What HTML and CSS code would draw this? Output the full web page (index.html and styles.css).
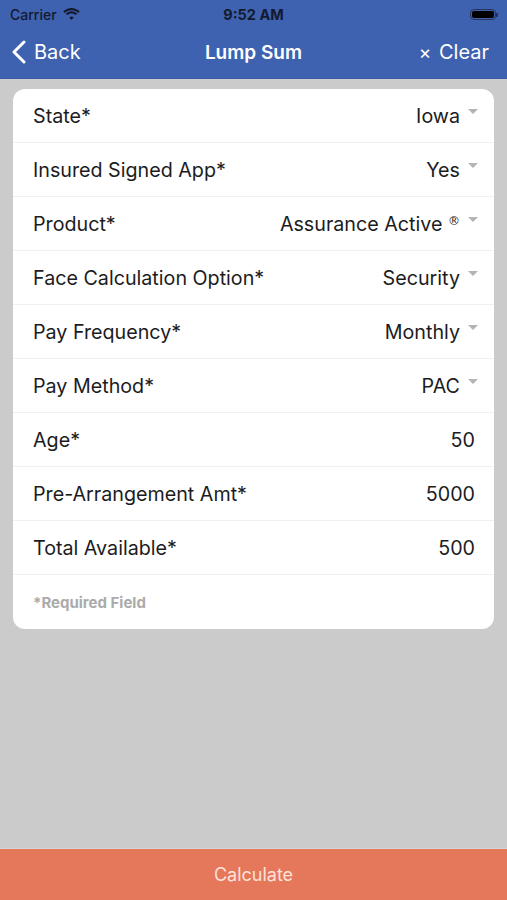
FILE: index.html
```html
<!DOCTYPE html>
<html lang="en">
<head>
  <meta charset="UTF-8">
  <meta name="viewport" content="width=device-width, initial-scale=1.0">
  <title>Lump Sum</title>
  <link rel="stylesheet" href="styles.css">
</head>
<body>
  <div class="app">
    <header class="top">
      <div class="status-bar">
        <div class="carrier">
          Carrier
          <svg class="wifi" width="17" height="12" viewBox="0 0 17 12">
            <path d="M8.5 2.2c2.6 0 5 1 6.8 2.7l1.4-1.5C14.5 1.3 11.6 0 8.5 0S2.5 1.3.3 3.4l1.4 1.5C3.5 3.2 5.9 2.2 8.5 2.2z" fill="#141a2e"/>
            <path d="M8.5 5.4c1.7 0 3.2.6 4.4 1.7l1.4-1.5C12.8 4.1 10.7 3.2 8.5 3.2s-4.3.9-5.8 2.4l1.4 1.5c1.2-1.1 2.7-1.7 4.4-1.7z" fill="#141a2e"/>
            <path d="M8.5 8.5c.9 0 1.6.3 2.2.9L8.5 12 6.3 9.4c.6-.6 1.3-.9 2.2-.9z" fill="#141a2e"/>
          </svg>
        </div>
        <div class="clock">9:52 AM</div>
        <div class="battery"><span></span></div>
      </div>
      <nav class="nav-bar">
        <a class="nav-back" href="#">
          <svg width="14" height="24" viewBox="0 0 14 24"><path d="M12 2 2 12l10 10" fill="none" stroke="#fff" stroke-width="3" stroke-linecap="round" stroke-linejoin="round"/></svg>
          Back
        </a>
        <div class="nav-title">Lump Sum</div>
        <a class="nav-clear" href="#"><span class="times">×</span> Clear</a>
      </nav>
    </header>

    <main class="content">
      <div class="form-card">
        <div class="field">
          <span class="label">State*</span>
          <span class="value select">Iowa</span>
        </div>
        <div class="field">
          <span class="label">Insured Signed App*</span>
          <span class="value select">Yes</span>
        </div>
        <div class="field">
          <span class="label">Product*</span>
          <span class="value select">Assurance Active <sup>®</sup></span>
        </div>
        <div class="field">
          <span class="label">Face Calculation Option*</span>
          <span class="value select">Security</span>
        </div>
        <div class="field">
          <span class="label">Pay Frequency*</span>
          <span class="value select">Monthly</span>
        </div>
        <div class="field">
          <span class="label">Pay Method*</span>
          <span class="value select">PAC</span>
        </div>
        <div class="field">
          <span class="label">Age*</span>
          <span class="value">50</span>
        </div>
        <div class="field">
          <span class="label">Pre-Arrangement Amt*</span>
          <span class="value">5000</span>
        </div>
        <div class="field">
          <span class="label">Total Available*</span>
          <span class="value">500</span>
        </div>
        <div class="form-note">*Required Field</div>
      </div>
    </main>

    <button class="calc-btn">Calculate</button>
  </div>
</body>
</html>
```

FILE: styles.css
```css
/* Reset */
html {
  box-sizing: border-box;
}
*, *:before, *:after {
  box-sizing: inherit;
}
body {
  margin: 0;
  font-family: Inter, 'Liberation Sans', sans-serif;
  background-color: #cbcbcb;
  color: #1c1c1e;
}

.app {
  height: 900px;
  display: flex;
  flex-direction: column;
}

/* Header: status bar + nav */
.top {
  background-color: #3e61b0;
  color: #fff;
  border-bottom: 1px solid #3a5ba6;
}
.status-bar {
  height: 28px;
  display: flex;
  align-items: center;
  justify-content: space-between;
  padding: 0 9px 0 10px;
  color: #141a2e;
  font-size: 14px;
  position: relative;
}
.carrier {
  display: flex;
  align-items: center;
  gap: 6px;
  font-weight: 500;
}
.wifi {
  margin-top: -1px;
}
.clock {
  position: absolute;
  left: 0;
  right: 0;
  text-align: center;
  font-weight: 700;
  font-size: 14.5px;
}
.battery {
  width: 26px;
  height: 11px;
  border: 1px solid #2a3458;
  border-radius: 4px;
  padding: 1px;
  position: relative;
  margin-right: 2px;
}
.battery span {
  display: block;
  height: 100%;
  background: #000;
  border-radius: 2px;
}
.battery::after {
  content: "";
  position: absolute;
  right: -3px;
  top: 3px;
  width: 2px;
  height: 4px;
  background: #2a3458;
  border-radius: 0 1px 1px 0;
}

.nav-bar {
  height: 50px;
  display: flex;
  align-items: center;
  justify-content: space-between;
  padding: 0 18px 2px 12px;
  position: relative;
}
.nav-bar a {
  color: #fff;
  text-decoration: none;
  font-size: 20px;
}
.nav-back {
  display: flex;
  align-items: center;
  gap: 8px;
}
.nav-title {
  position: absolute;
  left: 0;
  right: 0;
  text-align: center;
  font-size: 19px;
  font-weight: 600;
  pointer-events: none;
}
.nav-clear .times {
  font-size: 19px;
  margin-right: 2px;
}

/* Form card */
.content {
  flex: 1;
  padding: 10px 13px 0 13px;
}
.form-card {
  background: #fff;
  border-radius: 12px;
  overflow: hidden;
}
.field {
  height: 54px;
  display: flex;
  align-items: center;
  justify-content: space-between;
  padding: 0 19px 0 20px;
  border-bottom: 1px solid #f0f0f0;
  font-size: 19.7px;
}
.label {
  color: #1c1c1e;
}
.value {
  color: #1c1c1e;
}
.value sup {
  font-family: 'DejaVu Sans', 'Liberation Sans', sans-serif;
  font-size: 12px;
  vertical-align: 6px;
  color: #1c1c1e;
}
.value.select::after {
  content: "";
  display: inline-block;
  margin-left: 8px;
  margin-right: -3px;
  width: 0;
  height: 0;
  border-left: 5px solid transparent;
  border-right: 5px solid transparent;
  border-top: 5px solid #b4b4b4;
  vertical-align: 9px;
}
.form-note {
  height: 54px;
  padding: 0 20px;
  display: flex;
  align-items: center;
  font-size: 15px;
  font-weight: 700;
  color: #ababab;
}

/* Bottom action */
.calc-btn {
  height: 52px;
  border: none;
  border-top: 1px solid #d6d6d6;
  background-color: #e5775b;
  color: #fde2da;
  font-family: inherit;
  font-size: 18px;
  width: 100%;
  padding: 0;
}
```
